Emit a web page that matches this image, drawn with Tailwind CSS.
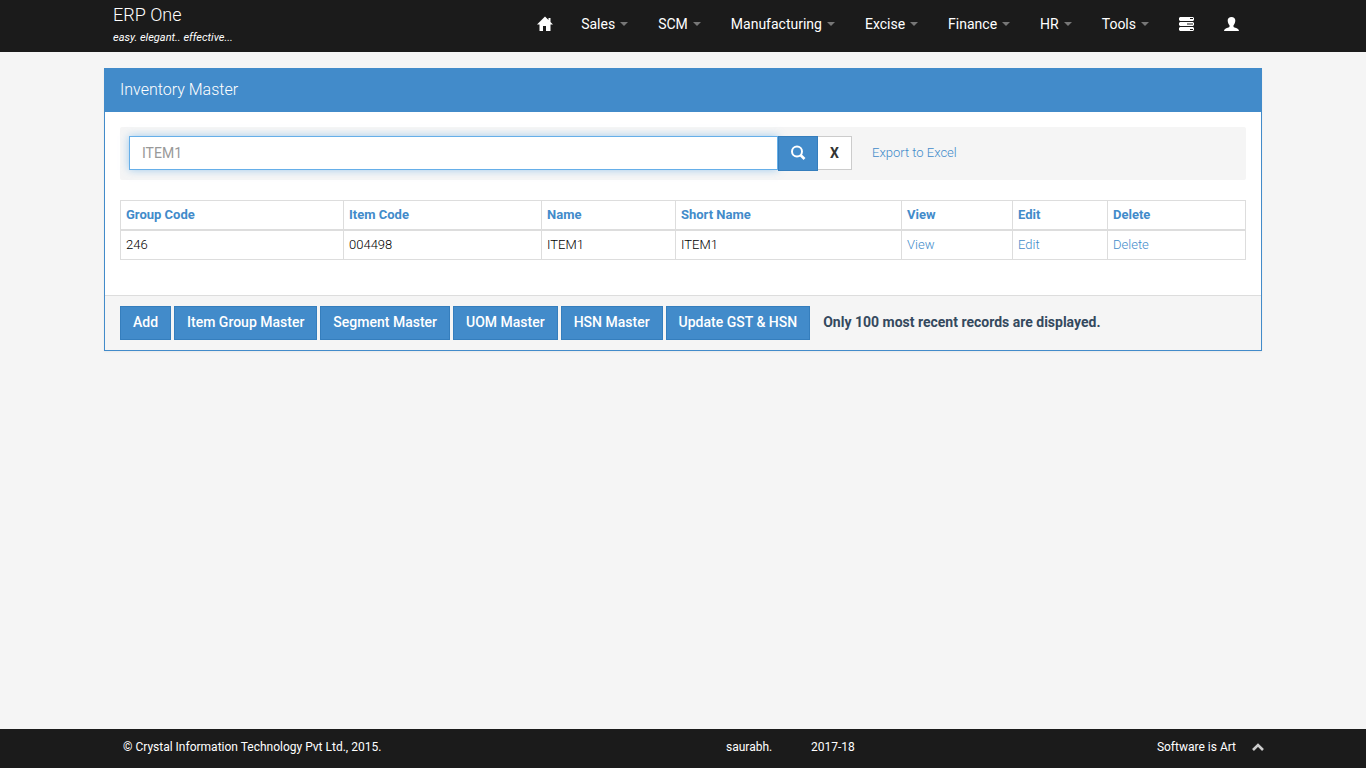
<!DOCTYPE html>
<html lang="en">
<head>
  <meta charset="UTF-8" />
  <meta name="viewport" content="width=device-width, initial-scale=1" />
  <title>ERP One - Inventory Master</title>

  <!-- Tailwind CSS -->
  <script src="https://cdn.jsdelivr.net/npm/@tailwindcss/browser@4"></script>
</head>

<body class="min-h-screen flex flex-col bg-[#f5f5f5] font-['Roboto',sans-serif] text-sm text-[#333]">

  <!-- Top bar -->
  <header class="h-[52px] bg-[#1b1b1b] text-white">
    <div class="w-full max-w-[1140px] mx-auto flex justify-between">
      <a href="#" class="block pt-1">
        <span class="block text-lg leading-[22px] font-light">ERP One</span>
        <span class="block text-[11px] leading-6 italic">easy. elegant.. effective...</span>
      </a>
      <nav class="flex items-center gap-[30px] h-12 mr-[14px]">
        <a href="#" aria-label="Home" class="-mr-[2px]">
          <svg class="w-4 h-4" viewBox="0 0 16 16" fill="currentColor"><path d="M8 0.500 0 8.500h2.500V15H6v-5h3v5h4.500V8.500H16L13.500 6V2h-2v2z"/></svg>
        </a>
        <a href="#" class="flex items-center gap-[5px]">Sales <span class="border-x-4 border-t-4 border-x-transparent border-t-[#777]"></span></a>
        <a href="#" class="flex items-center gap-[5px]">SCM <span class="border-x-4 border-t-4 border-x-transparent border-t-[#777]"></span></a>
        <a href="#" class="flex items-center gap-[5px]">Manufacturing <span class="border-x-4 border-t-4 border-x-transparent border-t-[#777]"></span></a>
        <a href="#" class="flex items-center gap-[5px]">Excise <span class="border-x-4 border-t-4 border-x-transparent border-t-[#777]"></span></a>
        <a href="#" class="flex items-center gap-[5px]">Finance <span class="border-x-4 border-t-4 border-x-transparent border-t-[#777]"></span></a>
        <a href="#" class="flex items-center gap-[5px]">HR <span class="border-x-4 border-t-4 border-x-transparent border-t-[#777]"></span></a>
        <a href="#" class="flex items-center gap-[5px]">Tools <span class="border-x-4 border-t-4 border-x-transparent border-t-[#777]"></span></a>
        <a href="#" aria-label="Tasks">
          <svg class="w-[15px] h-[15px]" viewBox="0 0 15 15" fill="currentColor" fill-rule="evenodd"><path d="M1 0h13l1 1v2l-1 1H1L0 3V1zM11 1v1h3V1zM1 5h13l1 1v2l-1 1H1L0 8V6zM8 6.500v1h6v-1zM1 10h13l1 1v2l-1 1H1l-1-1v-2zM11 12v1h3v-1z"/></svg>
        </a>
        <a href="#" aria-label="Account">
          <svg class="w-[15px] h-[15px]" viewBox="0 0 15 15" fill="currentColor"><path d="M7.500 0C9.800 0 11.300 1.300 11.300 3.300C11.300 5.300 10.700 7.100 9.500 8.200V9.500C9.500 10.100 10.200 10.400 11.300 10.800C13.500 11.500 14.800 12.200 15 14H0C0.200 12.200 1.500 11.500 3.700 10.800C4.800 10.400 5.500 10.100 5.500 9.500V8.200C4.300 7.100 3.700 5.300 3.700 3.300C3.700 1.300 5.200 0 7.500 0z"/></svg>
        </a>
      </nav>
    </div>
  </header>

  <!-- Inventory panel -->
  <main class="flex-1 w-full max-w-[1158px] mx-auto pt-4">
    <section class="bg-white border border-[#428bca] shadow-xs">
      <h1 class="bg-[#428bca] text-white text-base leading-5 font-light px-[15px] pt-[11px] pb-3">Inventory Master</h1>

      <div class="px-[15px] pt-[15px] pb-[35px]">
        <form class="flex items-start rounded-xs bg-[#f5f5f5] px-[9px] pt-[9px] h-[53px] mb-5" onsubmit="return false">
          <input type="text" aria-label="Search item" placeholder="ITEM1" class="w-[649px] h-[34px] px-3 bg-white border border-[#66afe9] shadow-[0_0_8px_rgba(102,175,233,0.6)] placeholder:text-[#999] outline-none">
          <button aria-label="Search" class="w-10 h-[35px] pb-[2px] flex items-center justify-center bg-[#428bca] border border-[#357ebd] text-white">
            <svg class="w-4 h-4" viewBox="0 0 16 16" fill="none" stroke="currentColor"><circle cx="7" cy="6.500" r="5" stroke-width="2"/><path d="m10.500 10 4 4" stroke-width="2.600"/></svg>
          </button>
          <button type="button" class="w-[34px] h-[34px] bg-white border border-l-0 border-[#ccc] font-bold">X</button>
          <a href="#" class="ml-5 leading-[34px] text-[13px] font-light text-[#428bca]">Export to Excel</a>
        </form>

        <table class="w-full table-fixed border-collapse text-[13px] leading-[18px] text-left text-black">
          <colgroup>
            <col class="w-[223px]">
            <col class="w-[198px]">
            <col class="w-[134px]">
            <col class="w-[226px]">
            <col class="w-[111px]">
            <col class="w-[95px]">
            <col>
          </colgroup>
          <thead class="text-[#428bca]">
            <tr>
              <th class="border border-b-2 border-[#ddd] px-[5px] py-[5px]">Group Code</th>
              <th class="border border-b-2 border-[#ddd] px-[5px] py-[5px]">Item Code</th>
              <th class="border border-b-2 border-[#ddd] px-[5px] py-[5px]">Name</th>
              <th class="border border-b-2 border-[#ddd] px-[5px] py-[5px]">Short Name</th>
              <th class="border border-b-2 border-[#ddd] px-[5px] py-[5px]">View</th>
              <th class="border border-b-2 border-[#ddd] px-[5px] py-[5px]">Edit</th>
              <th class="border border-b-2 border-[#ddd] px-[5px] py-[5px]">Delete</th>
            </tr>
          </thead>
          <tbody class="font-light">
            <tr>
              <td class="border border-[#ddd] px-[5px] py-[5px]">246</td>
              <td class="border border-[#ddd] px-[5px] py-[5px]">004498</td>
              <td class="border border-[#ddd] px-[5px] py-[5px]">ITEM1</td>
              <td class="border border-[#ddd] px-[5px] py-[5px]">ITEM1</td>
              <td class="border border-[#ddd] px-[5px] py-[5px]"><a href="#" class="text-[#428bca]">View</a></td>
              <td class="border border-[#ddd] px-[5px] py-[5px]"><a href="#" class="text-[#428bca]">Edit</a></td>
              <td class="border border-[#ddd] px-[5px] py-[5px]"><a href="#" class="text-[#428bca]">Delete</a></td>
            </tr>
          </tbody>
        </table>
      </div>

      <div class="flex items-center gap-[3px] bg-[#f5f5f5] border-t border-[#ddd] px-[15px] py-[10px]">
        <button class="h-[34px] px-3 pb-[2px] bg-[#428bca] border border-[#357ebd] text-white font-medium">Add</button>
        <button class="h-[34px] px-3 pb-[2px] bg-[#428bca] border border-[#357ebd] text-white font-medium">Item Group Master</button>
        <button class="h-[34px] px-3 pb-[2px] bg-[#428bca] border border-[#357ebd] text-white font-medium">Segment Master</button>
        <button class="h-[34px] px-3 pb-[2px] bg-[#428bca] border border-[#357ebd] text-white font-medium">UOM Master</button>
        <button class="h-[34px] px-3 pb-[2px] bg-[#428bca] border border-[#357ebd] text-white font-medium">HSN Master</button>
        <button class="h-[34px] px-3 pb-[2px] bg-[#428bca] border border-[#357ebd] text-white font-medium">Update GST &amp; HSN</button>
        <strong class="ml-[10px] pb-[2px] font-bold text-[#34495e]">Only 100 most recent records are displayed.</strong>
      </div>
    </section>
  </main>

  <!-- Bottom bar -->
  <footer class="bg-[#1b1b1b] text-white text-xs">
    <div class="w-full max-w-[1162px] mx-auto h-[39px] pb-[3px] pl-[21px] flex items-center">
      <span class="w-[603px]">© Crystal Information Technology Pvt Ltd., 2015.</span>
      <span class="w-[85px]">saurabh.</span>
      <span class="flex-1">2017-18</span>
      <span class="mr-4">Software is Art</span>
      <a href="#" aria-label="Back to top" class="text-[#ccc]">
        <svg class="w-3 h-3" viewBox="0 0 12 12" fill="none" stroke="currentColor" stroke-width="2.600"><path d="m1 9 5-5 5 5"/></svg>
      </a>
    </div>
  </footer>

</body>
</html>
